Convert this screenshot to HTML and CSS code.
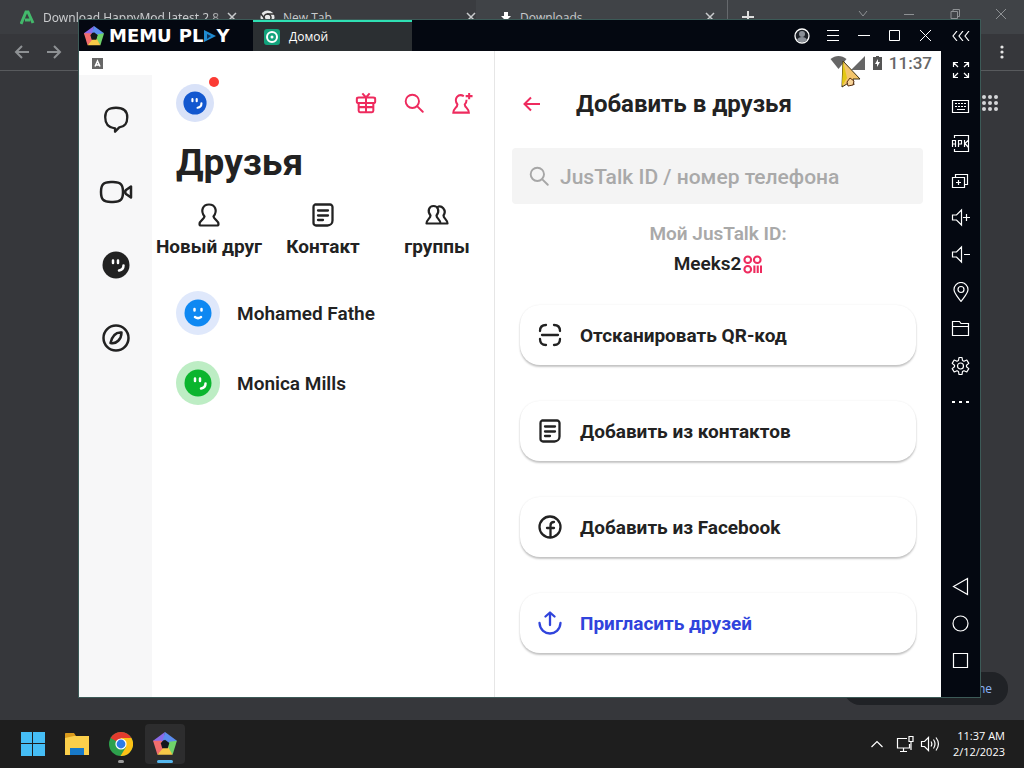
FILE: index.html
```
<!DOCTYPE html>
<html lang="ru">
  <head>
    <meta charset="UTF-8" />
    <meta name="viewport" content="width=device-width, initial-scale=1.0" />
    <title>MEmu Play</title>
    <link rel="stylesheet" href="styles.css">
  </head>
  <body>
    <!-- shared shapes -->
    <svg class="defs" aria-hidden="true">
      <symbol id="pentagon" viewBox="0 0 24 24">
        <path fill="#8b6be8" d="M12 1 1 9l4 5 6-6z" />
        <path fill="#5b8def" d="M12 1l11 8-6 3-7-4z" />
        <path fill="#6fd36a" d="M23 9l-4 13-5-6 2-6z" />
        <path fill="#f7c948" d="M19 22H5l4-7 6 0z" />
        <path fill="#f26d6d" d="M5 22 1 9l8 0 1 7z" />
        <path fill="#15171c" d="M12 8l4 3-1.500 5h-5L8 11z" />
      </symbol>
      <symbol id="note" viewBox="0 0 24 24">
        <path fill="none" stroke="currentColor" stroke-width="2.300" stroke-linecap="round" stroke-linejoin="round" d="M4 1.500h15a2.500 2.500 0 0 1 2.500 2.500v13.500a5 5 0 0 1-5 5h-11.500a2.500 2.500 0 0 1-2.500-2.500v-16a2.500 2.500 0 0 1 1.500-2.500zM7 7.500h10M7 12.500h10M7 17h5" />
      </symbol>
      <symbol id="person" viewBox="0 0 24 24">
        <path fill="none" stroke="currentColor" stroke-width="2.200" stroke-linejoin="round" d="M7.500 13.500C3 7.500 6 1.500 12 1.500s9 6 4.500 12c.5 3 5 4 5 7.500 0 1-.5 1.500-1.500 1.500H4c-1 0-1.500-.5-1.500-1.500 0-3.500 4.500-4.500 5-7.500z" />
      </symbol>
      <symbol id="magnifier" viewBox="0 0 24 24">
        <circle cx="10" cy="10" r="8" fill="none" stroke="currentColor" stroke-width="2.300" />
        <path stroke="currentColor" stroke-width="2.300" stroke-linecap="round" d="M16 16l6.500 6.500" />
      </symbol>
      <symbol id="wink" viewBox="0 0 28 28">
        <circle cx="14" cy="14" r="13.500" fill="currentColor" />
        <path fill="none" stroke="#fff" stroke-width="2.500" stroke-linecap="round" d="M11 9.500v2.500M16 9.500v2.500M21.500 14.500c0 3-1.500 4.500-4.500 5" />
      </symbol>
      <symbol id="smile" viewBox="0 0 28 28">
        <circle cx="14" cy="14" r="13.500" fill="currentColor" />
        <path fill="none" stroke="#fff" stroke-width="2.500" stroke-linecap="round" d="M10.500 10v1.500M17.500 10v1.500M11 18c2 1.500 4 1.500 6 0" />
      </symbol>
    </svg>

    <div class="desktop">
      <!-- browser behind the emulator -->
      <div class="browser">
        <div class="tabstrip">
          <div class="tab tab-first">
            <svg width="15" height="15" viewBox="0 0 15 15"><path fill="none" stroke="#43b96b" stroke-width="3" d="M1 14L6 2h2l5 11M5 10h5" /></svg>
            <span class="tab-name">Download HappyMod latest 2.8</span>
            <button class="plain" aria-label="Close tab"><svg width="10" height="10" viewBox="0 0 10 10"><path stroke="currentColor" stroke-width="1.500" d="M1 1l8 8M9 1L1 9" /></svg></button>
          </div>
          <div class="tab tab-second">
            <svg width="15" height="15" viewBox="0 0 15 15"><circle cx="7.500" cy="7.500" r="7" fill="#e6e7e8" /><circle cx="7.500" cy="7.500" r="3.500" fill="none" stroke="#333" stroke-width="1.500" /><path stroke="#333" stroke-width="1.500" d="M7 4h8M1 4l4 5" /></svg>
            <span class="tab-name">New Tab</span>
            <button class="plain" aria-label="Close tab"><svg width="10" height="10" viewBox="0 0 10 10"><path stroke="currentColor" stroke-width="1.500" d="M1 1l8 8M9 1L1 9" /></svg></button>
          </div>
          <div class="tab tab-third">
            <svg width="12" height="12" viewBox="0 0 12 12"><path fill="#fff" d="M4 1h4v4h3L6 10 1 5h3z" /></svg>
            <span class="tab-name">Downloads</span>
            <button class="plain" aria-label="Close tab"><svg width="10" height="10" viewBox="0 0 10 10"><path stroke="currentColor" stroke-width="1.500" d="M1 1l8 8M9 1L1 9" /></svg></button>
          </div>
          <button class="plain new-tab" aria-label="New tab"><svg width="12" height="12" viewBox="0 0 12 12"><path stroke="#ddd" stroke-width="2" d="M6 0v12M0 6h12" /></svg></button>
          <div class="browser-controls">
            <svg width="12" height="12" viewBox="0 0 12 12"><path d="M2 3l4 5 4-5" /></svg>
            <svg width="12" height="12" viewBox="0 0 12 12"><path d="M1 6.500h10" /></svg>
            <svg width="12" height="12" viewBox="0 0 12 12"><path d="M2 3.500h6.500v7H2zM4 3.500v-2h6.500v7h-2" /></svg>
            <svg width="12" height="12" viewBox="0 0 12 12"><path d="M1 1l10 10M11 1L1 11" /></svg>
          </div>
        </div>
        <div class="toolbar">
          <svg width="16" height="16" viewBox="0 0 16 16"><path d="M15 8H2M8 2L2 8l6 6" /></svg>
          <svg width="16" height="16" viewBox="0 0 16 16"><path d="M1 8h13M8 2l6 6-6 6" /></svg>
          <svg class="kebab" width="4" height="14" viewBox="0 0 4 14"><circle cx="2" cy="2" r="1.600" /><circle cx="2" cy="7" r="1.600" /><circle cx="2" cy="12" r="1.600" /></svg>
        </div>
        <div class="newtab-page">
          <svg class="apps" width="16" height="16" viewBox="0 0 16 16"><g fill="#d5d6d8"><circle cx="2" cy="2" r="2" /><circle cx="8" cy="2" r="2" /><circle cx="14" cy="2" r="2" /><circle cx="2" cy="8" r="2" /><circle cx="8" cy="8" r="2" /><circle cx="14" cy="8" r="2" /><circle cx="2" cy="14" r="2" /><circle cx="8" cy="14" r="2" /><circle cx="14" cy="14" r="2" /></g></svg>
          <button class="customize">Customize Chrome</button>
        </div>
      </div>

      <!-- emulator window -->
      <div class="emulator">
        <div class="titlebar">
          <div class="brand">
            <svg width="22" height="22"><use href="#pentagon" /></svg>
            <span class="brand-name">MEMU</span>
            <span class="brand-name">PL</span><svg width="13" height="14" viewBox="0 0 13 14"><path fill="#1f8ad0" d="M1 1l12 6L1 13z" /><path fill="#0d2f55" d="M4 5l4 2-4 3z" /></svg><span class="brand-name">Y</span>
          </div>
          <div class="emu-tab">
            <svg width="16" height="16" viewBox="0 0 16 16"><rect width="16" height="16" rx="3" fill="#12a37c" /><circle cx="8" cy="8" r="5" fill="none" stroke="#fff" stroke-width="2" /><circle cx="8" cy="8" r="1.500" fill="#fff" /></svg>
            <span>Домой</span>
          </div>
          <div class="window-controls">
            <button class="plain" aria-label="Аккаунт"><svg width="16" height="16" viewBox="0 0 16 16"><circle cx="8" cy="8" r="7" fill="#1c2027" stroke="#fff" stroke-width="1.300" /><circle cx="8" cy="6" r="3" fill="#8b9098" /><path fill="#8b9098" d="M3 12c1-4 9-4 10 0-2 3-8 3-10 0z" /></svg></button>
            <button class="plain" aria-label="Меню"><svg width="12" height="12" viewBox="0 0 12 12"><path d="M0 .5h12M0 5.500h12M0 10.500h12" /></svg></button>
            <button class="plain" aria-label="Свернуть"><svg width="12" height="12" viewBox="0 0 12 12"><path d="M0 5.500h12" /></svg></button>
            <button class="plain" aria-label="Развернуть"><svg width="12" height="12" viewBox="0 0 12 12"><path d="M.5.500h10v10H.5z" /></svg></button>
            <button class="plain" aria-label="Закрыть"><svg width="12" height="12" viewBox="0 0 12 12"><path d="M0 0l11 11M11 0L0 11" /></svg></button>
          </div>
        </div>

        <div class="sidebar">
          <button class="plain collapse" aria-label="Скрыть панель"><svg width="18" height="10" viewBox="0 0 18 10"><path d="M5 0L1 5l4 5M11 0L7 5l4 5M17 0l-4 5 4 5" /></svg></button>
          <button class="plain" aria-label="Полный экран"><svg viewBox="0 0 20 20"><path d="M2.500 7V2.500H7M3 3l4 4M13 2.500h4.500V7M17 3l-4 4M2.500 13v4.500H7M3 17l4-4M17.500 13v4.500H13M17 17l-4-4" /></svg></button>
          <button class="plain" aria-label="Клавиатура"><svg viewBox="0 0 20 20"><path d="M1.500 3.500h16v12h-16zM6 12.500h8" /><path stroke-dasharray="2 1" d="M4 6.500h12M4 9.500h12" /></svg></button>
          <button class="plain" aria-label="APK"><svg viewBox="0 0 20 20"><path d="M3.500 4V1.500h14v16h-14V15M1.500 13V6.500h3V13M1.500 10h3M7.500 13V6.500h3V10h-3M13.500 6v7M17 6.500l-3 3 3 3.500" /></svg></button>
          <button class="plain" aria-label="Мультиокно"><svg viewBox="0 0 20 20"><path d="M1.500 6.500h12v10h-12zM4.500 6.500v-3h12v10h-3M7.500 9v5M5 11.500h5" /></svg></button>
          <button class="plain" aria-label="Громче"><svg viewBox="0 0 20 20"><path d="M1.500 7h4l5-5v15l-5-5h-4zM12 9.500h7M15.500 6v7" /></svg></button>
          <button class="plain" aria-label="Тише"><svg viewBox="0 0 20 20"><path d="M1.500 7h4l5-5v15l-5-5h-4zM13 9.500h6" /></svg></button>
          <button class="plain" aria-label="Местоположение"><svg viewBox="0 0 20 20"><path d="M10 19.500C6 14 3 11 3 7.500a7 7 0 0 1 14 0C17 11 14 14 10 19.500z" /><circle cx="10" cy="7.500" r="3" /></svg></button>
          <button class="plain" aria-label="Папка"><svg viewBox="0 0 20 20"><path d="M1.500 16.500v-14h7l1.500 2h7.500v12zM1.500 7.500h16" /></svg></button>
          <button class="plain" aria-label="Настройки"><svg viewBox="0 0 20 20"><path stroke-linejoin="round" d="M8 1.500h3l.5 3 1.500.8 2.800-1.300 2 3.400-2.300 1.800v1.600l2.300 1.800-2 3.400-2.800-1.300-1.500.8-.5 3H8l-.5-3-1.500-.8L3.200 16l-2-3.400 2.300-1.800V9.200L1.200 7.400l2-3.400L6 5.300l1.500-.8z" /><circle cx="9.500" cy="10" r="3" /></svg></button>
          <button class="plain" aria-label="Ещё"><svg viewBox="0 0 20 20"><path stroke-width="2" d="M1 9h3M8 9h3M15 9h3" /></svg></button>
          <div class="nav-keys">
            <button class="plain" aria-label="Назад"><svg viewBox="0 0 20 20"><path d="M2.500 9.500l14-8v16z" /></svg></button>
            <button class="plain" aria-label="Домой"><svg viewBox="0 0 20 20"><circle cx="9.500" cy="9.500" r="7.500" /></svg></button>
            <button class="plain" aria-label="Обзор"><svg viewBox="0 0 20 20"><path d="M2.500 2.500h14v14h-14z" /></svg></button>
          </div>
        </div>

        <div class="screen">
          <div class="friends">
            <div class="status">
              <svg width="11" height="11" viewBox="0 0 11 11"><rect width="11" height="11" fill="#666" /><path fill="none" stroke="#fff" stroke-width="1.500" d="M3 8.500L5.500 3 8 8.500M4 7h3" /></svg>
            </div>
            <nav class="rail">
              <button class="plain" aria-label="Сообщения"><svg width="30" height="32" viewBox="0 0 32 32"><path d="M16 4c8.500 0 12 3.500 12 10s-2 10-8.500 11L15 29.500V26C7 25 4.500 21 4.500 14S7.500 4 16 4z" /></svg></button>
              <button class="plain" aria-label="Звонки"><svg width="34" height="32" viewBox="0 0 34 32"><path d="M12 6h2c8 0 10 3 10 10s-2 10-10 10h-2C4 26 2 23 2 16S4 6 12 6zM32 10.500v11l-5-3.500c-1-1-1-3 0-4z" /></svg></button>
              <button class="plain" aria-label="Друзья"><svg width="28" height="28"><use href="#wink" /></svg></button>
              <button class="plain" aria-label="Обзор"><svg width="28" height="28" viewBox="0 0 28 28"><circle cx="14" cy="14" r="12.500" /><path d="M19.500 8.500c-5-.5-9 2-11 10.500 6 1.500 11-4 11-10.500z" /></svg></button>
            </nav>
            <main class="list">
              <div class="list-head">
                <div class="me"><svg width="24" height="24"><use href="#wink" /></svg><i class="dot"></i></div>
                <div class="head-actions">
                  <button class="plain" aria-label="Подарок"><svg width="22" height="22" viewBox="0 0 24 24"><path d="M4 6h16c1.500 0 2 .5 2 1.500v3c0 1-.5 1.500-2 1.500H4c-1.500 0-2-.5-2-1.500v-3C2 6.500 2.500 6 4 6zM4 12v8.500c0 1 .5 1.500 1.500 1.500h13c1 0 1.500-.5 1.500-1.500V12M12 6v16M4 16.500h16M8 1.500L12 6l4-4.500" /></svg></button>
                  <button class="plain" aria-label="Поиск"><svg width="20" height="20"><use href="#magnifier" /></svg></button>
                  <button class="plain" aria-label="Добавить"><svg width="22" height="22" viewBox="0 0 24 24"><path d="M14 4.500C8 1 2.500 7.500 7 13.500 7 17 2.500 18 2.500 22.500h17c0-4.500-4.500-5.500-4.500-9 1.500-1.500 2-3 2-5M16 4.500h7.500M19.800 1v7" /></svg></button>
                </div>
              </div>
              <h1>Друзья</h1>
              <div class="shortcuts">
                <button class="plain"><svg width="24" height="24"><use href="#person" /></svg>Новый друг</button>
                <button class="plain"><svg width="24" height="24"><use href="#note" /></svg>Контакт</button>
                <button class="plain"><svg width="26" height="24" viewBox="0 0 26 24"><path fill="none" stroke="currentColor" stroke-width="2.200" stroke-linejoin="round" d="M6.500 12.500C3 8 5 3 9.500 3s6.500 5 3 9.500c0 3 4 4 4 8h-14c0-4 4-5 4-8zM13 4.500c4.500-3.500 10 3 6.500 8 0 3 4 4 4 8h-7" /></svg>группы</button>
              </div>
              <ul class="people">
                <li><span class="avatar blue"><svg width="28" height="28"><use href="#smile" /></svg></span>Mohamed Fathe</li>
                <li><span class="avatar green"><svg width="28" height="28"><use href="#wink" /></svg></span>Monica Mills</li>
              </ul>
            </main>
          </div>

          <section class="add">
            <div class="status status-right">
              <svg width="17" height="14" viewBox="0 0 16 14"><path fill="#666" d="M0 3c5-4 11-4 16 0L8 13z" /></svg>
              <svg width="14" height="14" viewBox="0 0 14 14"><path fill="#666" d="M14 0v14H0z" /></svg>
              <svg class="battery" width="9" height="14" viewBox="0 0 9 14"><path fill="#555" d="M3 0h3v1h3v13H0V1h3z" /><path fill="#fff" d="M5 3L2 8h2v3l3-5H5z" /></svg>
              <span>11:37</span>
            </div>
            <header class="add-head">
              <button class="plain" aria-label="Назад"><svg width="18" height="18" viewBox="0 0 18 18"><path d="M17 9H2M8 2.500L1.500 9 8 15.500" /></svg></button>
              <h2>Добавить в друзья</h2>
            </header>
            <label class="search">
              <svg width="20" height="20"><use href="#magnifier" /></svg>
              <input type="text" placeholder="JusTalk ID / номер телефона" aria-label="JusTalk ID / номер телефона" />
            </label>
            <p class="my-id">Мой JusTalk ID:</p>
            <p class="my-name">Meeks2<svg width="19" height="19" viewBox="0 0 20 20"><g fill="none" stroke="#ee2b5e" stroke-width="2.200"><circle cx="5" cy="5" r="3.500" /><circle cx="15" cy="5" r="3.500" /><circle cx="5" cy="15" r="3.500" /><path d="M12 11v8M15.500 11v8M19 11v8" /></g></svg></p>
            <div class="options">
              <button><svg width="24" height="24" viewBox="0 0 24 24"><path d="M2 8c0-4 1.500-6 6-6M16 2c4.500 0 6 2 6 6M2 16c0 4 1.500 6 6 6M16 22c4.500 0 6-2 6-6M4 12h16" /></svg>Отсканировать QR-код</button>
              <button><svg width="24" height="24"><use href="#note" /></svg>Добавить из контактов</button>
              <button><svg width="24" height="24" viewBox="0 0 24 24"><circle cx="12" cy="12" r="10.500" /><path d="M12.500 22V10.500c0-2.500 1-3.500 3.500-3.500M9 13h7" /></svg>Добавить из Facebook</button>
              <button class="invite"><svg width="24" height="24" viewBox="0 0 24 24"><path d="M12 14V2M7.500 5.500L12 1.500l4.500 4M1.500 12c1 14 20 14 21 0" /></svg>Пригласить друзей</button>
            </div>
          </section>
        </div>
        <svg class="cursor" width="22" height="30" viewBox="0 0 22 30"><path fill="#f3c56b" stroke="#3b3012" d="M3 2l17 18-7 0 1 6-4-3-8 5z" /><path fill="#e3c814" d="M3 2l4 17-5 8z" /><path fill="#f8d59a" stroke="#5a2f12" d="M7 23l3-4 4 3-1 4-5 1z" /></svg>
      </div>

      <footer class="taskbar">
        <div class="apps-bar">
          <button class="plain" aria-label="Start"><svg width="24" height="24" viewBox="0 0 24 24"><path fill="#45bdf5" d="M0 0h11v11H0zM12 0h12v11H12zM0 12h11v12H0zM12 12h12v12H12z" /></svg></button>
          <button class="plain" aria-label="Explorer"><svg width="26" height="24" viewBox="0 0 26 24"><path fill="#d99a1c" d="M1 2c0-1 .5-1 1-1h8l2 3v4H1z" /><path fill="#fbcf4b" d="M1 6l9-2h15v19H1z" /><path fill="#1779c9" d="M6 16h14v7H6z" /></svg></button>
          <button class="plain running" aria-label="Chrome"><svg width="24" height="24" viewBox="0 0 24 24"><circle cx="12" cy="12" r="12" fill="#2da14c" /><path fill="#e23b2e" d="M12 12L1.600 6a12 12 0 0 1 20.800 0z" /><path fill="#fbc116" d="M12 12V6h10.400A12 12 0 0 1 11.500 24L17 15z" /><circle cx="12" cy="12" r="5.600" fill="#fff" /><circle cx="12" cy="12" r="4.400" fill="#2c7be5" /></svg></button>
          <button class="plain running active" aria-label="MEmu"><svg width="26" height="26"><use href="#pentagon" /></svg></button>
        </div>
        <div class="tray">
          <svg width="14" height="14" viewBox="0 0 14 14"><path d="M1.500 10L7 4.500l5.500 5.500" /></svg>
          <svg width="18" height="18" viewBox="0 0 18 18"><path d="M11 3.500H1.500v9.500h12V9M7.500 13v3M4 16.500h7M13 1.500h4v5h-4zM15 6.500v8.500" /></svg>
          <svg width="20" height="18" viewBox="0 0 20 18"><path d="M1.500 6.500h3l4-4v13l-4-4h-3zM11 6.500c1 1.500 1 3.500 0 5M13.500 4.500c2 3 2 6 0 9M16 2.500c3 4 3 9 0 13" /></svg>
          <div class="clock"><div>11:37 AM</div><div>2/12/2023</div></div>
        </div>
      </footer>
    </div>
  </body>
</html>
```
FILE: styles.css
```
* {
  box-sizing: border-box;
}
body {
  margin: 0;
  font-family: Roboto, "Liberation Sans", sans-serif;
  color: #222;
}
h1, h2, p, ul {
  margin: 0;
  padding: 0;
}
button {
  font: inherit;
  color: inherit;
}
svg {
  flex: none;
}
.plain {
  display: flex;
  align-items: center;
  justify-content: center;
  padding: 0;
  border: 0;
  background: none;
}
.defs {
  position: absolute;
  width: 0;
  height: 0;
}
.desktop {
  position: relative;
  display: flex;
  flex-direction: column;
  height: 100vh;
  overflow: hidden;
}

/* browser */
.browser {
  flex: 1;
  display: flex;
  flex-direction: column;
  background: #36373b;
  color: #c9cbcd;
  font: 12px "Open Sans", "Noto Sans", sans-serif;
}
.tabstrip {
  display: flex;
  align-items: center;
  height: 34px;
  background: #404347;
}
.tab {
  display: flex;
  align-items: center;
  gap: 8px;
  height: 34px;
}
.tab-name {
  flex: 1;
  white-space: nowrap;
}
.tab-first {
  width: 250px;
  padding: 0 13px 0 20px;
  background: #3b3d41;
}
.tab-first .tab-name {
  font-family: "Noto Sans", sans-serif;
  font-size: 12px;
  mask-image: linear-gradient(90deg, #000 92%, rgba(0, 0, 0, 0.3));
}
.tab-first .plain {
  margin-left: -6px;
}
.tab-second {
  width: 226px;
  padding: 0 0 0 10px;
  background: #3a3c40;
}
.tab-third {
  width: 252px;
  padding: 0 12px 0 24px;
  border-right: 1px solid #66696d;
}
.new-tab {
  width: 40px;
}
.browser-controls {
  display: flex;
  gap: 34px;
  margin-left: auto;
  margin-right: 17px;
  padding-bottom: 6px;
}
.browser-controls svg,
.toolbar svg {
  fill: none;
  stroke: #8e9194;
}
.toolbar {
  display: flex;
  align-items: center;
  gap: 16px;
  height: 37px;
  padding: 0 20px 0 14px;
  border-bottom: 1px solid #585a5d;
}
.toolbar svg {
  stroke-width: 2;
}
.toolbar .kebab {
  margin-left: auto;
  fill: #e6e6e6;
  stroke: none;
}
.newtab-page {
  flex: 1;
  display: flex;
  flex-direction: column;
  align-items: flex-end;
  justify-content: space-between;
  padding: 24px 16px 15px;
}
.apps {
  margin-right: 10px;
}
.customize {
  width: 164px;
  height: 33px;
  padding: 0 16px;
  border: 0;
  border-radius: 16px;
  background: #202226;
  color: #8ab4f8;
  text-align: right;
}

/* emulator window */
.emulator {
  position: absolute;
  top: 19px;
  right: 43px;
  bottom: 70px;
  left: 78px;
  display: grid;
  grid-template-columns: 1fr 39px;
  grid-template-rows: 31px 1fr;
  border: 1px solid #3c5a57;
  background: #040811;
}
.titlebar {
  display: flex;
  min-width: 0;
  color: #fff;
}
.brand {
  display: flex;
  align-items: center;
  width: 174px;
  padding-left: 4px;
}
.brand-name {
  font: bold 18px "DejaVu Sans", sans-serif;
}
.brand-name:nth-of-type(1) {
  margin: 0 7px 0 4px;
}
.emu-tab {
  display: flex;
  align-items: center;
  gap: 9px;
  width: 159px;
  padding-left: 11px;
  border-top: 2px solid #2fe0b4;
  background: #2b2f32;
  font: 12px "Open Sans", "Noto Sans", sans-serif;
}
.window-controls {
  display: flex;
  margin-left: auto;
}
.window-controls .plain {
  width: 31px;
}
.window-controls path,
.sidebar svg {
  fill: none;
  stroke: #fff;
}
.window-controls .plain:first-child path {
  fill: #8b9098;
  stroke: none;
}
.sidebar {
  grid-column: 2;
  grid-row: 1 / 3;
  display: flex;
  flex-direction: column;
  padding-bottom: 18px;
}
.sidebar .plain {
  width: 100%;
  height: 37px;
}
.sidebar svg {
  width: 20px;
  height: 20px;
  stroke-width: 1.2;
}
.sidebar .collapse {
  height: 31px;
}
.sidebar .collapse svg {
  width: 18px;
  height: 10px;
}
.nav-keys {
  margin-top: auto;
}
.screen {
  grid-row: 2;
  grid-column: 1;
  display: grid;
  grid-template-columns: 416px 1fr;
  min-height: 0;
  background: #fff;
}
.status {
  display: flex;
  align-items: center;
  height: 24px;
  color: #666;
}

/* friends */
.friends {
  display: grid;
  grid-template-columns: 73px 1fr;
  grid-template-rows: 24px 1fr;
  border-right: 1px solid #e6e6e6;
}
.friends .status {
  grid-column: 1 / 3;
  padding-left: 13px;
}
.rail {
  display: flex;
  flex-direction: column;
  padding-top: 7px;
  background: #f7f7f8;
}
.rail .plain {
  height: 73px;
}
.rail path,
.rail circle {
  fill: none;
  stroke: #222;
  stroke-width: 2.5;
  stroke-linejoin: round;
}
.list-head {
  display: flex;
  align-items: center;
  justify-content: space-between;
  height: 56px;
  padding: 0 21px 0 24px;
}
.me {
  position: relative;
  display: flex;
  align-items: center;
  justify-content: center;
  width: 38px;
  height: 38px;
  border-radius: 50%;
  background: #d9e2f8;
  color: #1257cf;
}
.dot {
  position: absolute;
  top: -7px;
  right: -5px;
  width: 10px;
  height: 10px;
  border-radius: 50%;
  background: #fb3b34;
}
.head-actions {
  display: flex;
  gap: 27px;
  color: #ee2b5e;
}
.head-actions path {
  fill: none;
  stroke: #ee2b5e;
  stroke-width: 2.2;
}
h1 {
  padding-left: 24px;
  font-size: 37px;
  line-height: 64px;
}
.shortcuts {
  display: grid;
  grid-template-columns: repeat(3, 1fr);
  padding-right: -1px;
}
.shortcuts .plain {
  flex-direction: column;
  gap: 8px;
  padding-top: 8px;
  font-size: 19px;
  line-height: 24px;
  font-weight: 700;
  white-space: nowrap;
}
.people {
  padding: 19px 24px 0;
  list-style: none;
}
.people li {
  display: flex;
  align-items: center;
  gap: 17px;
  height: 70px;
  font-size: 19px;
  font-weight: 600;
}
.avatar {
  display: flex;
  align-items: center;
  justify-content: center;
  width: 44px;
  height: 44px;
  border-radius: 50%;
}
.blue {
  background: #dfe8fb;
  color: #0e88f2;
}
.green {
  background: #bdedc4;
  color: #0bb52e;
}

/* add a friend */
.status-right {
  justify-content: flex-end;
  gap: 4px;
  padding-right: 9px;
  font-size: 17px;
  font-weight: 500;
}
.battery {
  margin: 0 3px 0 4px;
}
.add-head {
  display: flex;
  align-items: center;
  gap: 35px;
  height: 58px;
  padding-left: 28px;
}
.add-head path {
  fill: none;
  stroke: #ee2b5e;
  stroke-width: 2;
}
h2 {
  font-size: 24px;
}
.search {
  display: flex;
  align-items: center;
  gap: 11px;
  height: 56px;
  margin: 15px 18px 0 17px;
  padding: 0 17px;
  border-radius: 4px;
  background: #f4f4f4;
  color: #a6a6a6;
}
.search input {
  flex: 1;
  min-width: 0;
  padding: 2px 0 0;
  border: 0;
  outline: 0;
  background: none;
  font: 500 21px Roboto, sans-serif;
}
.search input::placeholder {
  color: #a9a9a9;
}
.my-id,
.my-name {
  display: flex;
  align-items: center;
  justify-content: center;
  font-size: 19px;
  line-height: 30px;
  font-weight: 600;
}
.my-id {
  padding-top: 15px;
  color: #a9a9a9;
}
.my-name {
  gap: 2px;
}
.options {
  display: flex;
  flex-direction: column;
  gap: 36px;
  padding: 26px 25px 0;
}
.options button {
  display: flex;
  align-items: center;
  gap: 18px;
  height: 60px;
  padding: 0 18px;
  border: 0;
  border-radius: 20px;
  background: #fff;
  box-shadow: 0 2px 2px rgba(0, 0, 0, 0.22), 0 0 2px rgba(0, 0, 0, 0.08);
  font-size: 19px;
  font-weight: 700;
}
.options path,
.options circle {
  fill: none;
  stroke: currentColor;
  stroke-width: 2.3;
  stroke-linecap: round;
  stroke-linejoin: round;
}
.options .invite {
  color: #3044dc;
}
.cursor {
  position: absolute;
  top: 39px;
  right: 118px;
}

/* taskbar */
.taskbar {
  display: flex;
  align-items: center;
  justify-content: space-between;
  height: 48px;
  padding: 0 19px 0 13px;
  background: #1e1e1e;
  color: #fff;
}
.apps-bar {
  display: flex;
  gap: 4px;
}
.apps-bar .plain {
  position: relative;
  width: 40px;
  height: 40px;
  border-radius: 4px;
}
.apps-bar .active {
  background: #2d2d2e;
}
.running::after {
  content: "";
  position: absolute;
  bottom: 1px;
  width: 6px;
  height: 3px;
  border-radius: 2px;
  background: #9a9a9a;
}
.active::after {
  width: 16px;
  background: #55b7ee;
}
.tray {
  display: flex;
  align-items: center;
  gap: 6px;
  font: 11px/16px "Open Sans", "Noto Sans", sans-serif;
  text-align: right;
}
.tray svg {
  fill: none;
  stroke: #fff;
  stroke-width: 1.2;
}
.tray svg:first-child {
  margin-right: 6px;
}
.clock {
  margin-left: 7px;
}
```
